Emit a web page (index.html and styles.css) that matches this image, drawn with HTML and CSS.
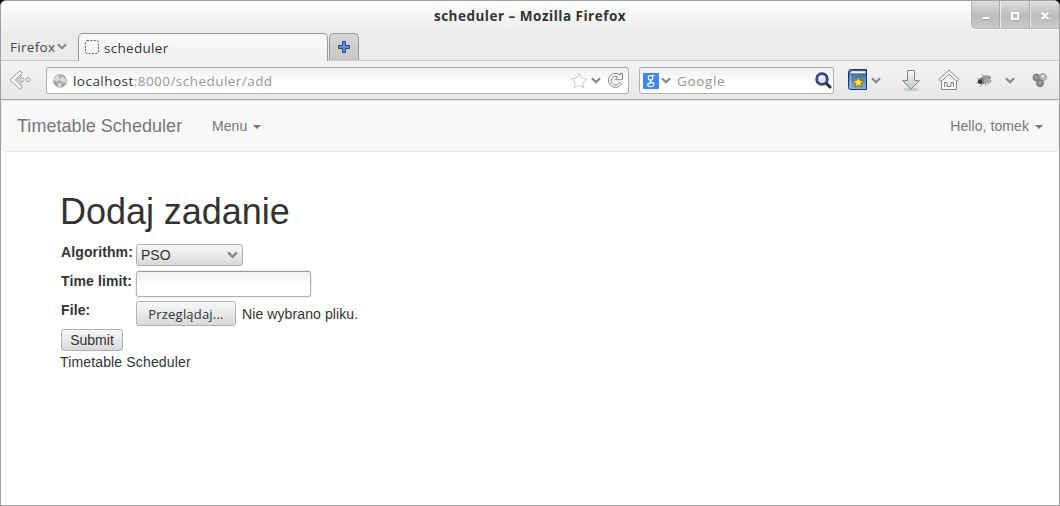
FILE: index.html
```html
<!DOCTYPE html>
<html lang="pl">
<head>
<meta charset="utf-8">
<title>scheduler</title>
<link rel="stylesheet" href="styles.css">
</head>
<body>
<svg class="defs" width="0" height="0">
  <defs>
    <linearGradient id="blue" x2="0" y2="1"><stop stop-color="#315f9b"/><stop offset="1" stop-color="#8ab0dc"/></linearGradient>
    <linearGradient id="silver" x2="0" y2="1"><stop stop-color="#f7f8f8"/><stop offset="1" stop-color="#c3c8ca"/></linearGradient>
    <symbol id="chev" viewBox="0 0 10 7"><path d="M1 1.2 L5 5.2 L9 1.2" fill="none" stroke="#888a85" stroke-width="2.2"/></symbol>
  </defs>
</svg>
<div class="window">
  <header class="titlebar">
    <div class="window-title">scheduler – Mozilla Firefox</div>
    <div class="controls">
      <span class="control"><svg width="16" height="16"><path d="M5 12.500h6" stroke="#999" stroke-width="1"/><path d="M5 11h6" stroke="#fff" stroke-width="2"/></svg></span>
      <span class="control"><svg width="16" height="16"><path d="M5 7h6v6H5z" fill="none" stroke="#aaa" stroke-width="2"/><path d="M5 6h6v6H5z" fill="none" stroke="#fff" stroke-width="2"/></svg></span>
      <span class="control"><svg width="16" height="16"><path d="M4.700 6.700l6.600 6.600m0-6.600l-6.600 6.600" stroke="#999" stroke-width="2.200"/><path d="M4.700 5.700l6.600 6.600m0-6.600l-6.600 6.600" stroke="#fff" stroke-width="2.300"/></svg></span>
    </div>
  </header>
  <div class="tabs">
    <div class="app-menu">Firefox<svg width="10" height="7"><use href="#chev"/></svg></div>
    <div class="tab"><svg width="14" height="14"><rect x=".5" y=".5" width="13" height="13" rx="1.5" fill="none" stroke="#666" stroke-dasharray="2 1.4"/></svg><span>scheduler</span></div>
    <div class="new-tab"><svg width="14" height="14"><path d="M5.500 1.500h3v4h4v3h-4v4h-3v-4h-4v-3h4z" fill="#5f93d0" stroke="#204a87" stroke-linejoin="round"/></svg></div>
  </div>
  <div class="toolbar">
    <svg class="back" width="23" height="21" fill="#f8f8f8" stroke="#9a9c98"><path d="M11 .8L1 9.800l10 9.500 2.300-2.300-7-7.200 7-6.700z"/><path d="M13 5L8.500 9.700 13 14.500" fill="none"/><circle cx="13.200" cy="9.700" r="1.900"/><circle cx="19.200" cy="9.700" r="1.900"/></svg>
    <div class="field url">
      <svg class="globe" width="14" height="14"><circle cx="7" cy="7" r="6.800" fill="#a4a4a4"/><path d="M1 4.500L4 1.200l3 .5-1 2 1.500 1.500-3 2.200L2 7zM9 2.300l3 2.200 1 3-2 2-1.700-2.300-2 .3L6.800 5zM5.500 8.500l3 1-1 4-2.500-1z" fill="#ddd"/></svg>
      <span class="address"><b>localhost</b>:8000/scheduler/add</span>
      <svg class="star" width="18" height="17"><path d="M9 1.200l2.300 5 5.400.6-4 3.700 1.100 5.400L9 13.200l-4.800 2.700 1.100-5.400-4-3.700 5.400-.6z" fill="#fff" stroke="#c8c9c7"/></svg>
      <svg class="url-chev" width="10" height="7"><use href="#chev"/></svg>
      <svg class="reload" width="17" height="17"><path d="M10.800 1.700A7 7 0 1 0 14.500 11.800l-2.200-1.300A4.300 4.300 0 1 1 10.600 4.900L8.300 7.700h7.200V1.200h-2v1.900z" fill="#fafafa" stroke="#858784" stroke-linejoin="round"/></svg>
    </div>
    <div class="field search">
      <svg width="16" height="16"><rect width="16" height="16" rx="1" fill="#4285f4"/><g fill="none" stroke="#fff" stroke-width="1.200"><ellipse cx="7.500" cy="4.800" rx="2.200" ry="2.300"/><path d="M8.500 2.600H11.500M8.500 7.200C6 8 7 9 9 9.400c3.200 1 2.200 4.200-1.500 4.200-4 0-4-3.400.8-3.800"/></g></svg>
      <svg class="search-chev" width="10" height="7"><use href="#chev"/></svg>
      <span class="placeholder">Google</span>
      <svg class="lens" width="17" height="17"><path d="M11.500 11.500l3.500 3.500" stroke="#2b2b2b" stroke-width="3" stroke-linecap="round"/><circle cx="7" cy="7" r="5.300" fill="#dfe6f0" stroke="#262f75" stroke-width="2.800"/><circle cx="7" cy="7" r="5.300" fill="none" stroke="#5f6fb8" stroke-width=".7"/><path d="M4.500 7A2.500 2.500 0 0 1 7 4.500" fill="none" stroke="#fff" stroke-width="1.300"/></svg>
    </div>
    <svg class="book" width="21" height="22"><path d="M1.500 3.500q0-3 3-3h15v20h-16q-2 0-2-2z" fill="url(#blue)" stroke="#173d70"/><path d="M3 4q0-2 2-2h13.500v2.500H4z" fill="#f4f4f4" stroke="#777" stroke-width=".5"/><path d="M3.500 5.500v13.500" stroke="#9abce2"/><path d="M11.200 8l1.600 3.500 3.800.4-2.900 2.500.9 3.800-3.400-2-3.400 2 .9-3.800-2.900-2.500 3.800-.4z" fill="#fce94f" stroke="#967400"/></svg>
    <svg class="book-chev" width="10" height="7"><use href="#chev"/></svg>
    <svg class="download" width="20" height="23"><ellipse cx="10" cy="20.500" rx="8" ry="1.600" fill="#ccc"/><path d="M6.500 1.500h7v10h4.800L10 20.300 1.700 11.500h4.800z" fill="url(#silver)" stroke="#858784"/></svg>
    <svg class="home" width="22" height="22" fill="#f7f7f7" stroke="#858784"><path d="M3.500 11v9.500h15V11L11 4z"/><path d="M11 1L1 10.500l2 2 8-7.300 8 7.300 2-2z"/><path d="M6.500 18v-4.500h2.500v4h4v-4h2.500V18" fill="none"/></svg>
    <svg class="fly" width="18" height="15"><path d="M2 5l4 3M1 10l5-1M5 14l3-4M11 13l-1-4M7 1l3 4M14 12l-3-4" stroke="#888" stroke-width=".8"/><ellipse cx="8" cy="7.500" rx="5.500" ry="3.500" transform="rotate(-18 8 7.500)" fill="#777"/><ellipse cx="11.500" cy="4.500" rx="4.500" ry="2.300" fill="#999"/><ellipse cx="12.500" cy="8" rx="4" ry="2" fill="#aaa"/><circle cx="5" cy="8.800" r="2" fill="#333"/></svg>
    <svg class="fly-chev" width="10" height="7"><use href="#chev"/></svg>
    <svg class="balls" width="16" height="15"><circle cx="4.500" cy="4.500" r="3.500" fill="#888" stroke="#777"/><circle cx="11" cy="4" r="3.500" fill="#bbb" stroke="#999"/><circle cx="8" cy="10.200" r="3.500" fill="#898989" stroke="#777"/><circle cx="11" cy="3" r="1.300" fill="#e5e5e5"/><circle cx="4" cy="3.800" r="1.200" fill="#aaa"/><circle cx="8" cy="9.500" r="1.200" fill="#aaa"/></svg>
  </div>
  <main class="page">
    <nav class="navbar">
      <span class="brand">Timetable Scheduler</span>
      <span class="nav-item">Menu<i class="caret"></i></span>
      <span class="nav-item user">Hello, tomek<i class="caret"></i></span>
    </nav>
    <section class="container">
      <h1>Dodaj zadanie</h1>
      <form class="form">
        <label class="l-alg">Algorithm:</label>
        <div class="button select"><span>PSO</span><svg width="11" height="8"><use href="#chev"/></svg></div>
        <label class="l-time">Time limit:</label>
        <input class="text-input" type="text">
        <label class="l-file">File:</label>
        <div class="file"><span class="button browse">Przeglądaj...</span><span class="file-name">Nie wybrano pliku.</span></div>
      </form>
      <div class="button submit">Submit</div>
      <footer>Timetable Scheduler</footer>
    </section>
  </main>
</div>
</body>
</html>
```
FILE: styles.css
```css
* { box-sizing: border-box; }
body { margin: 0; background: #000; font: 14px/20px "Liberation Sans", Arial, sans-serif; color: #333; }
svg { display: block; flex: none; }
.defs { position: absolute; }
.window { width: 1060px; height: 506px; border: 1px solid #a0a0a0; border-radius: 6px 6px 0 0; background: #fff; overflow: hidden; }
.titlebar, .tabs, .toolbar { font-family: "Open Sans", "Noto Sans", sans-serif; color: #2e3436; white-space: nowrap; }
.titlebar { height: 31px; display: grid; grid-template-columns: 88px 1fr 88px; background: linear-gradient(#fefefe, #ededed); }
.window-title { grid-column: 2; text-align: center; font-weight: 700; font-size: 13.5px; line-height: 31px; letter-spacing: .5px; }
.controls { display: flex; height: 28px; border: 1px solid #b5b5b5; border-width: 0 0 1px 1px; border-radius: 0 0 0 5px; background: linear-gradient(#dedede, #bcbcbc 55%, #c9c9c9); box-shadow: 0 1px #fafafa; }
.control { flex: 1; display: flex; align-items: center; justify-content: center; }
.control + .control { border-left: 1px solid #e8e8e8; box-shadow: -1px 0 #aaa; }
.tabs { height: 28px; display: flex; background: #ebebeb; padding-top: 1px; }
.app-menu { width: 77px; padding: 4px 0 0 9px; display: flex; font-size: 13.5px; color: #444a4c; letter-spacing: .3px; }
.app-menu svg { margin: 6px 0 0 2px; }
.tab { width: 250px; height: 28px; display: flex; border: 1px solid #999; border-bottom: 0; border-radius: 5px 5px 0 0; background: linear-gradient(#fafafa, #f1f1f1); padding: 6px 0 0 6px; font-size: 13.5px; letter-spacing: .3px; position: relative; z-index: 1; }
.tab span { margin-left: 5px; line-height: 16px; }
.new-tab { width: 30px; height: 27px; margin-left: 1px; border: 1px solid #999; border-bottom: 0; border-radius: 5px 5px 0 0; background: linear-gradient(#d6d6d6, #c7c7c7); display: flex; align-items: center; justify-content: center; }
.toolbar { height: 40px; display: flex; align-items: center; border-top: 1px solid #cacaca; border-bottom: 1px solid #a6a6a6; background: linear-gradient(#f3f3f3, #e7e7e7); padding-left: 8px; }
.back { margin-right: 14px; }
.field { height: 27px; display: flex; align-items: center; border: 1px solid #b2b3b1; border-top-color: #a6a6a6; border-radius: 3px; background: linear-gradient(#f0f0f0, #fff 60%); margin-top: 1px; }
.url { width: 583px; padding-left: 6px; }
.address { margin-left: 6px; font-size: 13.5px; letter-spacing: .46px; color: #959795; flex: 1; }
.address b { font-weight: 400; color: #2e3436; }
.url-chev { margin: 0 6px 0 3px; }
.reload { margin-right: 4px; }
.search { width: 195px; margin-left: 10px; padding-left: 3px; }
.search-chev { margin-left: 2px; }
.placeholder { flex: 1; margin-left: 6px; color: #959795; font-size: 13.5px; letter-spacing: .65px; }
.lens { margin-right: 1px; }
.book { margin-left: 13px; }
.book-chev { margin-left: 3px; }
.download { margin-left: 20px; }
.home { margin-left: 17px; }
.fly { margin-left: 15px; }
.fly-chev { margin-left: 12px; }
.balls { margin-left: 17px; }
.navbar { height: 52px; display: flex; align-items: center; background: #f8f8f8; border: 1px solid #e7e7e7; border-radius: 4px; color: #777; padding: 0 15px; white-space: nowrap; }
.brand { font-size: 18px; letter-spacing: .04px; width: 195px; }
.nav-item { display: flex; align-items: center; letter-spacing: .08px; }
.user { margin-left: auto; }
.caret { border: 4px solid transparent; border-top-color: #777; border-bottom: 0; margin: 2px 0 0 6px; }
.container { padding: 40px 59px 0; }
h1 { font-weight: 400; font-size: 36px; line-height: 40px; margin: 0 0 10px; letter-spacing: -.04px; }
.form { display: grid; grid-template-columns: 75px auto; grid-template-rows: 29px 30px 28px; margin-left: 1px; }
.form label { font-weight: 700; white-space: nowrap; letter-spacing: .12px; }
.button { border: 1px solid #b0b0b0; border-radius: 3px; background: linear-gradient(#f8f8f8, #d9d9d9); }
.select { width: 107px; height: 22px; margin-top: 2px; display: flex; justify-content: space-between; align-items: center; padding: 0 4px; }
.text-input { width: 175px; height: 26px; border: 1px solid #b3b3b3; border-top-color: #999; border-radius: 3px; background: linear-gradient(#f1f1f1, #fff 60%); box-shadow: 0 0 0 1px #eee; outline: 0; }
.l-file { margin-top: -1px; }
.file { display: flex; }
.browse { width: 100px; height: 25px; text-align: center; font: 13px/24px "Open Sans", "Noto Sans", sans-serif; letter-spacing: .2px; color: #2e3436; }
.file-name { margin: 3px 0 0 6px; letter-spacing: .1px; }
.submit { width: 62px; height: 22px; margin-left: 1px; text-align: center; }
footer { margin-top: 1px; letter-spacing: .15px; }
```
